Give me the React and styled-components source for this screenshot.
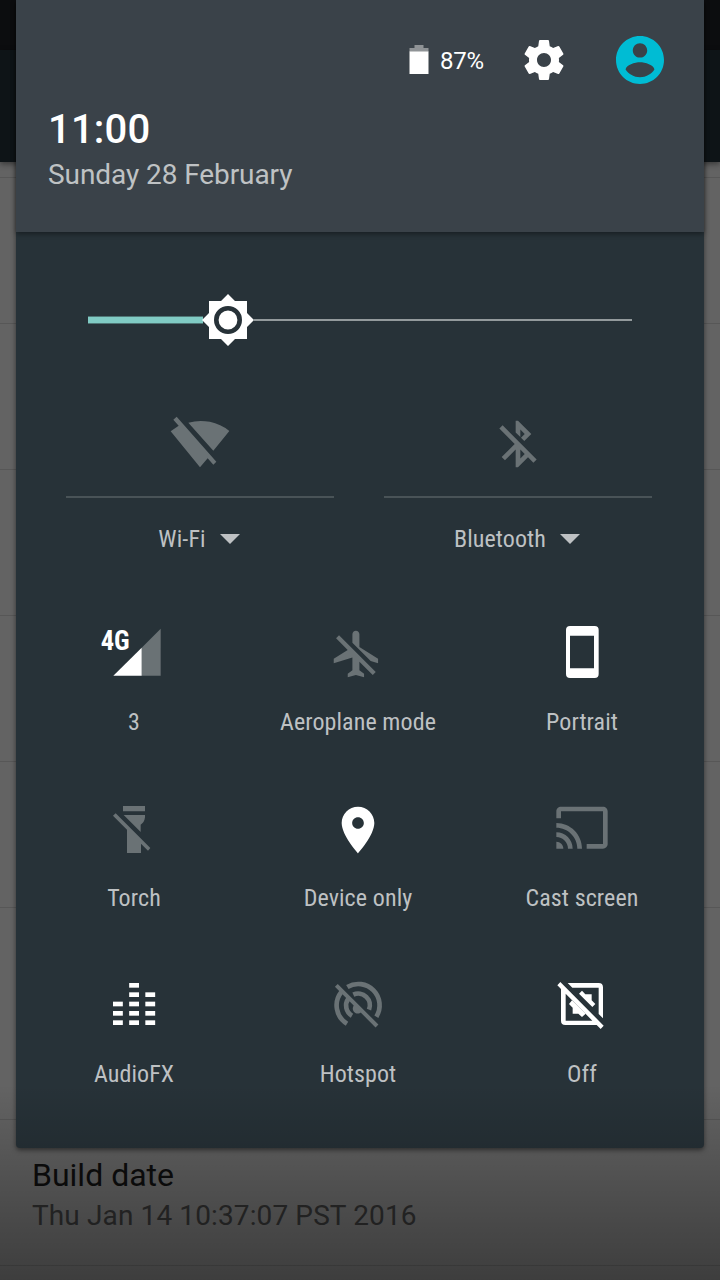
import React from "react";
import styled, { createGlobalStyle } from "styled-components";

const GlobalStyle = createGlobalStyle`
  * { box-sizing: border-box; }
  body { margin: 0; background: #626262; font-family: Roboto, "Liberation Sans", sans-serif; }
`;

const Screen = styled.div`
  position: relative;
  width: 720px;
  height: 1280px;
  overflow: hidden;
  background: #636363;
`;

const AppBackground = styled.div`
  display: flex;
  flex-direction: column;
`;

const StatusBar = styled.div`
  height: 50px;
  background: #0c0d0f;
`;

const Toolbar = styled.div`
  height: 112px;
  background: #0e1417;
  box-shadow: 0 2px 6px rgba(0, 0, 0, 0.45);
`;

const SettingsList = styled.div`
  display: flex;
  flex-direction: column;
  padding-top: 15px;
`;

const SettingsRow = styled.div`
  height: ${(p) => p.$height || 146}px;
  padding: 35px 32px 0;
  border-top: 1px solid #575757;
`;

const RowTitle = styled.div`
  font-size: 32px;
  line-height: 40px;
  color: #0d0d0d;
`;

const RowSummary = styled.div`
  margin-top: 3px;
  font-size: 28px;
  line-height: 36px;
  letter-spacing: 0.12px;
  color: #2d2d2d;
`;

const NavScrim = styled.div`
  position: absolute;
  inset: auto 0 0 0;
  height: 196px;
  background: linear-gradient(rgba(0, 0, 0, 0), rgba(0, 0, 0, 0.38));
  pointer-events: none;
`;

const Panel = styled.section`
  position: absolute;
  top: 0;
  left: 16px;
  width: 688px;
  height: 1148px;
  display: flex;
  flex-direction: column;
  background: #273238;
  border-radius: 0 0 4px 4px;
  box-shadow: 0 2px 5px rgba(0, 0, 0, 0.5);
`;

const Header = styled.header`
  flex: none;
  height: 232px;
  padding: 32px 40px 0 32px;
  background: #3a4249;
  box-shadow: 0 2px 5px rgba(0, 0, 0, 0.4);
`;

const StatusIcons = styled.div`
  display: flex;
  align-items: center;
  justify-content: flex-end;
  height: 56px;
`;

const BatteryLevel = styled.span`
  width: 44px;
  margin: 0 36px 0 11px;
  padding-top: 2px;
  font-size: 24px;
  line-height: 28px;
  letter-spacing: -0.3px;
  color: #fff;
  white-space: nowrap;
`;

const Avatar = styled.svg`
  margin-left: 48px;
`;

const Clock = styled.div`
  margin-top: 18px;
  font-size: 40px;
  font-weight: 500;
  line-height: 48px;
  letter-spacing: 0.2px;
  color: #fff;
`;

const DateLine = styled.div`
  margin-top: 5px;
  font-size: 28px;
  line-height: 32px;
  letter-spacing: -0.08px;
  color: #bfc2c4;
`;

const Brightness = styled.div`
  flex: none;
  display: flex;
  align-items: center;
  height: 56px;
  margin: 60px 72px 0;
`;

const TrackFill = styled.div`
  width: 115px;
  height: 8px;
  border: solid rgba(128, 203, 196, 0.45);
  border-width: 1px 0;
  background: #80cbc4;
  background-clip: padding-box;
`;

const Thumb = styled.svg`
  margin: 0 -1px;
  flex: none;
`;

const Track = styled.div`
  flex: 1;
  height: 2px;
  background: #939a9c;
`;

const WideTiles = styled.div`
  display: flex;
  flex: none;
  gap: 50px;
  padding: 68px 0 0 50px;
`;

const WideTile = styled.div`
  display: flex;
  flex-direction: column;
  align-items: center;
  width: 268px;
`;

const Divider = styled.div`
  width: 100%;
  height: 2px;
  margin: 24px 0 27px;
  background: #495357;
`;

const Label = styled.span`
  font-family: "Roboto Condensed", Roboto, "Liberation Sans", sans-serif;
  font-stretch: 75%;
  font-size: 24px;
  line-height: 28px;
  letter-spacing: 0.1px;
  color: #bec1c3;
  white-space: nowrap;
`;

const DropdownLabel = styled.div`
  display: flex;
  align-items: center;
  gap: 14px;
  margin-right: 2px;
`;

const TileGrid = styled.div`
  display: grid;
  flex: none;
  grid-template-columns: repeat(3, 224px);
  grid-auto-rows: 176px;
  padding: 73px 0 0 6px;
`;

const TileBox = styled.div`
  display: flex;
  flex-direction: column;
  align-items: center;
  gap: 26px;
`;

const Glyph = styled.svg`
  display: block;
  flex: none;
  overflow: visible;
  fill: ${(p) => (p.$off ? "#6a7275" : "#fff")};
  stroke: none;
`;

const SignalText = styled.text`
  font-family: "Roboto Condensed", Roboto, sans-serif;
  font-stretch: 75%;
  font-weight: 700;
  font-size: 84px;
`;

function Icon({ off, viewBox = "0 0 24 24", children }) {
  return (
    <Glyph width="56" height="56" viewBox={viewBox} $off={off} aria-hidden="true">
      {children}
    </Glyph>
  );
}

function Tile({ label, ...icon }) {
  return (
    <TileBox>
      <Icon {...icon} />
      <Label>{label}</Label>
    </TileBox>
  );
}

function Dropdown({ label }) {
  return (
    <DropdownLabel>
      <Label>{label}</Label>
      <svg width="20" height="10" viewBox="0 0 20 10">
        <path fill="#bec1c3" d="M0 0h20L10 10z" />
      </svg>
    </DropdownLabel>
  );
}

const equalizerColumns = [
  { x: 99, from: 2 },
  { x: 147.5, from: 0 },
  { x: 196, from: 1 },
];

const tiles = [
  {
    label: "3",
    viewBox: "78 48 168 168",
    children: (
      <>
        <SignalText x="62" y="119" textLength="87" lengthAdjust="spacingAndGlyphs">4G</SignalText>
        <path fill="#6a7275" d="M185 113L242 56V197H185z" />
        <path d="M100 197L185 113V197z" />
      </>
    ),
  },
  {
    label: "Aeroplane mode",
    off: true,
    viewBox: "0.4 0 24 24",
    children: (
      <path d="M13 9V3.5c0-.83-.67-1.5-1.5-1.5S10 2.67 10 3.5v3.68l7.83 7.83L21 16v-2l-8-5zM3 5.27l4.99 4.99L2 14v2l8-2.5V19l-2 1.5V22l3.5-1 3.5 1v-1.5L13 19v-3.73L18.73 21 20 19.73 4.27 4 3 5.27z" />
    ),
  },
  {
    label: "Portrait",
    viewBox: "162 48 168 168",
    children: (
      <path fillRule="evenodd" d="M210 48H284Q296 48 296 60V192Q296 204 284 204H210Q198 204 198 192V60Q198 48 210 48zM210 77V175H282V77z" />
    ),
  },
  {
    label: "Torch",
    off: true,
    viewBox: "78 36 168 168",
    children: (
      <path d="M129 48H195V64H129zM131 75H195V82Q193 98 182 104V126zM99 77L107 70L211 174L204 182L183 161V189H141V119z" />
    ),
  },
  {
    label: "Device only",
    children: (
      <path d="M12 2C8.13 2 5 5.13 5 9c0 5.25 7 13 7 13s7-7.75 7-13c0-3.87-3.13-7-7-7zm0 9.5c-1.38 0-2.5-1.12-2.5-2.5s1.12-2.5 2.5-2.5 2.5 1.12 2.5 2.5-1.12 2.5-2.5 2.5z" />
    ),
  },
  {
    label: "Cast screen",
    off: true,
    viewBox: "0 1 24 24",
    children: (
      <path d="M21 3H3c-1.1 0-2 .9-2 2v3h2V5h18v14h-7v2h7c1.1 0 2-.9 2-2V5c0-1.1-.9-2-2-2zM1 18v3h3c0-1.66-1.34-3-3-3zm0-4v2c2.76 0 5 2.24 5 5h2c0-3.87-3.13-7-7-7zm0-4v2c4.97 0 9 4.03 9 9h2c0-6.08-4.93-11-11-11z" />
    ),
  },
  {
    label: "AudioFX",
    viewBox: "78 39 168 168",
    children: equalizerColumns.map(({ x, from }) =>
      [54, 82, 110, 138, 166].slice(from).map((y) => (
        <rect key={`${x}-${y}`} x={x} y={y} width="29.5" height="14" />
      ))
    ),
  },
  {
    label: "Hotspot",
    off: true,
    viewBox: "750 39 168 168",
    children: (
      <>
        <g fill="none" stroke="#6a7275" strokeWidth="14">
          <path d="M784 81A64 64 0 0 0 801 176" />
          <path d="M802 66A64 64 0 0 1 889 155" />
          <path d="M805 101A35 35 0 0 0 816 152" />
          <path d="M820 89A35 35 0 0 1 867 134" />
          <path strokeWidth="12" d="M769 61L891 183" />
        </g>
        <path d="M824 116L846 138A14 14 0 0 1 820 124z" />
      </>
    ),
  },
  {
    label: "Off",
    viewBox: "162 39 168 168",
    children: (
      <>
        <path d="M203 54H296Q309 54 309 67V160L296 147V68H217z" />
        <path fillRule="evenodd" d="M172 61L181 51L311 182L302 192L290 180H196Q183 180 183 167V72zM197 86V167H277z" />
        <path d="M216 106L207 117L218 128V146H235L246 156L257 146zM237 86L246 77L256 88H275V106L286 117L277 126z" />
      </>
    ),
  },
];

export default function App() {
  return (
    <Screen>
      <GlobalStyle />
      <AppBackground>
        <StatusBar />
        <Toolbar />
        <SettingsList>
          {[146, 146, 146, 146, 146, 212].map((height, i) => (
            <SettingsRow key={i} $height={height} />
          ))}
          <SettingsRow>
            <RowTitle>Build date</RowTitle>
            <RowSummary>Thu Jan 14 10:37:07 PST 2016</RowSummary>
          </SettingsRow>
          <SettingsRow />
        </SettingsList>
      </AppBackground>

      <Panel>
        <Header>
          <StatusIcons>
            <svg width="20" height="30" viewBox="0 0 20 30">
              <path fill="#8f9396" d="M5.5 0h9v3H19.500v4h-19V3h5z" />
              <path fill="#fff" d="M.5 6.500h19V29H.5z" />
            </svg>
            <BatteryLevel>87%</BatteryLevel>
            <Glyph width="48" height="48" viewBox="0 0 24 24">
              <path d="M19.43 12.98c.04-.32.07-.64.07-.98s-.03-.66-.07-.98l2.11-1.65c.19-.15.24-.42.12-.64l-2-3.46c-.12-.22-.39-.3-.61-.22l-2.49 1c-.52-.4-1.08-.73-1.69-.98l-.38-2.65C14.46 2.18 14.25 2 14 2h-4c-.25 0-.46.18-.49.42l-.38 2.65c-.61.25-1.17.59-1.69.98l-2.49-1c-.23-.09-.49 0-.61.22l-2 3.46c-.13.22-.07.49.12.64l2.11 1.65c-.04.32-.07.65-.07.98s.03.66.07.98l-2.11 1.65c-.19.15-.24.42-.12.64l2 3.46c.12.22.39.3.61.22l2.49-1c.52.4 1.08.73 1.69.98l.38 2.65c.03.24.24.42.49.42h4c.25 0 .46-.18.49-.42l.38-2.65c.61-.25 1.17-.59 1.69-.98l2.49 1c.23.09.49 0 .61-.22l2-3.46c.12-.22.07-.49-.12-.64l-2.11-1.65zM12 15.500c-1.930 0-3.500-1.570-3.500-3.500s1.570-3.500 3.500-3.500 3.500 1.570 3.500 3.500-1.570 3.500-3.500 3.500z" />
            </Glyph>
            <Avatar width="48" height="48" viewBox="2 2 20 20">
              <path fill="#00bcd4" d="M12 2C6.48 2 2 6.48 2 12s4.48 10 10 10 10-4.480 10-10S17.520 2 12 2zm0 3c1.660 0 3 1.340 3 3s-1.340 3-3 3-3-1.340-3-3 1.340-3 3-3zm0 14.200c-2.500 0-4.710-1.280-6-3.220.03-1.990 4-3.080 6-3.080 1.990 0 5.970 1.090 6 3.080-1.290 1.940-3.500 3.220-6 3.220z" />
            </Avatar>
          </StatusIcons>
          <Clock>11:00</Clock>
          <DateLine>Sunday 28 February</DateLine>
        </Header>

        <Brightness>
          <TrackFill />
          <Thumb width="52" height="52" viewBox="-26 -26 52 52">
            <path fill="#fff" d="M0-26L7-19H19V-7L26 0L19 7V19H7L0 26L-7 19H-19V7L-26 0L-19-7V-19H-7z" />
            <circle r="11.700" fill="none" stroke="#273238" strokeWidth="4.600" />
          </Thumb>
          <Track />
        </Brightness>

        <WideTiles>
          <WideTile>
            <Icon off viewBox="366 48 168 168">
              <path d="M415 68A137 137 0 0 1 538 93L490 152zM370 59L380 50L499 185L490 194L473 175L450 202L362 94L386 77z" />
            </Icon>
            <Divider />
            <Dropdown label="Wi-Fi" />
          </WideTile>
          <WideTile>
            <Icon off>
              <path d="M13 5.830l1.880 1.880-1.600 1.600 1.410 1.410 3.020-3.020L12 2h-1v5.030l2 2v-3.200zM5.410 4L4 5.410 10.590 12 5 17.590 6.410 19 11 14.410V22h1l4.290-4.290 2.300 2.290L20 18.590 5.410 4zM13 18.170v-3.760l1.880 1.880L13 18.170z" />
            </Icon>
            <Divider />
            <Dropdown label="Bluetooth" />
          </WideTile>
        </WideTiles>

        <TileGrid>
          {tiles.map((tile) => (
            <Tile key={tile.label} {...tile} />
          ))}
        </TileGrid>
      </Panel>
      <NavScrim />
    </Screen>
  );
}
